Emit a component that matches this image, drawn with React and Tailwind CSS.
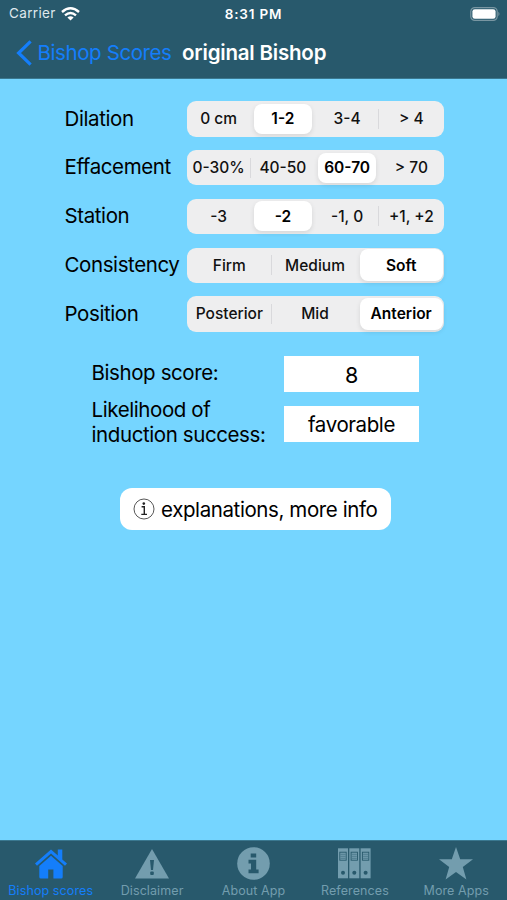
import React, { useState } from 'react';

const questions = [
    { label: 'Dilation', options: ['0 cm', '1-2', '3-4', '> 4'], initial: 1 },
    { label: 'Effacement', options: ['0-30%', '40-50', '60-70', '> 70'], initial: 2 },
    { label: 'Station', options: ['-3', '-2', '-1, 0', '+1, +2'], initial: 1 },
    { label: 'Consistency', options: ['Firm', 'Medium', 'Soft'], initial: 2 },
    { label: 'Position', options: ['Posterior', 'Mid', 'Anterior'], initial: 2 },
];

const HomeIcon = () => (
    <svg width="32" height="30" viewBox="0 0 32 30" fill="currentColor">
        <path d="M16 0.5 L0 14.5 L2 16.8 L16 4.6 L30 16.8 L32 14.5 L27.3 10.4 V0.5 H22.8 V6.4 Z" />
        <path d="M16 6.8 L4.3 17 V28 Q4.3 29.5 5.8 29.5 H13.2 V20.5 H18.4 V29.5 H26.2 Q27.7 29.5 27.7 28 V17 Z" />
    </svg>
);

const WarningIcon = () => (
    <svg width="34" height="30" viewBox="0 0 34 30">
        <path d="M17 0 L34 29.5 H0 Z" fill="currentColor" />
        <path d="M15 11 H19 L18 21 H16 Z" fill="#28596c" />
        <rect x="15.2" y="22.6" width="3.6" height="3.4" rx="1" fill="#28596c" />
    </svg>
);

const InfoIcon = () => (
    <svg width="33" height="33" viewBox="0 0 33 33">
        <circle cx="16.5" cy="16.5" r="16.3" fill="currentColor" />
        <path d="M13.7 6.4 H19.2 V10.4 H13.7 Z M11.5 12.8 H19.2 V22.6 H21.6 V26.2 H11.5 V22.6 H14 V16.4 H11.5 Z" fill="#28596c" />
    </svg>
);

const BindersIcon = () => (
    <svg width="33" height="31" viewBox="0 0 33 31">
        {[0, 11.3, 22.6].map((x) => (
            <g key={x} transform={`translate(${x} 0)`}>
                <rect x="0" y="0.3" width="10" height="30" fill="currentColor" />
                <rect x="1.8" y="4.2" width="6.4" height="8" fill="none" stroke="#28596c" strokeWidth="0.9" />
                <path d="M2.5 6.3 H7.5 M2.5 8.3 H7.5 M2.5 10.3 H7.5" stroke="#28596c" strokeWidth="0.5" />
                <circle cx="5" cy="24.7" r="2" fill="#28596c" />
            </g>
        ))}
    </svg>
);

const StarIcon = () => (
    <svg width="34" height="33" viewBox="0 0 34 33" fill="currentColor">
        <path d="M17 0 L21.2 12.2 H34 L23.8 20.1 L27.4 32.5 L17 25.1 L6.6 32.5 L10.2 20.1 L0 12.2 H12.8 Z" />
    </svg>
);

const tabs = [
    { name: 'Bishop scores', icon: HomeIcon },
    { name: 'Disclaimer', icon: WarningIcon },
    { name: 'About App', icon: InfoIcon },
    { name: 'References', icon: BindersIcon },
    { name: 'More Apps', icon: StarIcon },
];

const Segmented = ({ options, value, onChange }) => (
    <div className="flex h-[35.4px] w-[257px] rounded-[9px] bg-[#eeeeef]">
        {options.map((option, i) => {
            const selected = i === value;
            const divider = i > 0 && !selected && i - 1 !== value;
            const wide = options.length === 3;
            return (
                <button
                    key={option}
                    onClick={() => onChange(i)}
                    className="flex flex-1 basis-0 items-center justify-center text-[15.5px] font-medium text-[#111] whitespace-nowrap"
                >
                    <span className={divider ? 'h-5 w-px -ml-px bg-[#d9d9dc]' : 'h-5 w-0'}></span>
                    <span
                        className={
                            selected
                                ? `flex flex-1 items-center justify-center rounded-[8px] bg-white font-semibold text-black shadow-[0_2px_5px_rgba(0,0,0,0.1)] ${wide ? 'mr-px ml-[2px] h-8' : 'mx-[3px] h-[30px]'}`
                                : 'flex-1 text-center'
                        }
                    >
                        {option}
                    </span>
                </button>
            );
        })}
    </div>
);

const App = () => {
    const [answers, setAnswers] = useState(questions.map((q) => q.initial));
    const [activeTab, setActiveTab] = useState('Bishop scores');

    const choose = (row, i) => setAnswers(answers.map((a, r) => (r === row ? i : a)));

    return (
        <div className="flex h-[900px] w-[507px] flex-col overflow-hidden bg-[#75d5ff] font-['Inter',sans-serif] text-black">
            <header className="h-[79px] shrink-0 border-b border-[#3a7890] bg-[#28596c] text-white">
                {/* Status bar */}
                <div className="grid h-[27px] grid-cols-3 items-center px-[6px] text-[13.5px]">
                    <div className="flex items-center gap-[5px] pl-[3px] text-[#dfe8ec]">
                        <span className="tracking-[0.35px]">Carrier</span>
                        <svg width="19" height="14" viewBox="0 0 19 14" fill="none" stroke="white" strokeWidth="2.4">
                            <path d="M1 5 Q9.5 -2.4 18 5" />
                            <path d="M4 8.4 Q9.5 3.6 15 8.4" />
                            <path d="M9.5 13.6 L6.4 10.5 Q9.5 8 12.6 10.5 Z" fill="white" stroke="none" />
                        </svg>
                    </div>
                    <div className="pt-px text-center font-semibold tracking-[0.8px]">8:31 PM</div>
                    <svg className="justify-self-end" width="31" height="14" viewBox="0 0 31 14">
                        <rect x="0.8" y="0.6" width="26.4" height="12.8" rx="4" fill="none" stroke="#7996a2" strokeWidth="1.2" />
                        <rect x="2.4" y="2.2" width="23.2" height="9.6" rx="2.4" fill="white" />
                        <path d="M28.4 4.8 Q30.6 7 28.4 9.2 Z" fill="#7996a2" />
                    </svg>
                </div>
                {/* Navigation bar */}
                <div className="flex h-[51px] items-center pl-[16px]">
                    <button className="flex items-center gap-[4.5px] text-[20.5px] tracking-[-0.4px] text-[#147efb]">
                        <svg width="17" height="26" viewBox="0 0 17 26" fill="none" stroke="currentColor" strokeWidth="3.2">
                            <path d="M14.6 1.4 L2.6 13 L14.6 24.6" />
                        </svg>
                        <span className="pt-px">Bishop Scores</span>
                    </button>
                    <h1 className="ml-[10.5px] pt-px text-[20.5px] font-semibold tracking-[-0.2px]">original Bishop</h1>
                </div>
            </header>

            <main className="flex-1 pt-[22.2px]">
                <div className="flex flex-col gap-[13.4px] pl-[64.5px]">
                    {questions.map((q, row) => (
                        <div key={q.label} className="flex items-center">
                            <span className="w-[122px] text-[20.5px] leading-none tracking-[-0.4px]">{q.label}</span>
                            <Segmented options={q.options} value={answers[row]} onChange={(i) => choose(row, i)} />
                        </div>
                    ))}
                </div>

                <div className="mt-[24px] grid grid-cols-[192.5px_135px] gap-y-[14.5px] pl-[91.5px] text-[20.5px] leading-6 tracking-[-0.4px]">
                    <div className="flex h-[36px] items-center pb-px">Bishop score:</div>
                    <div className="flex h-[36px] items-center justify-center bg-white pt-[2px] text-[21.5px]">8</div>
                    <div className="-mt-[8px] leading-[24.5px]">Likelihood of<br />induction success:</div>
                    <div className="flex h-[36px] items-center justify-center bg-white pt-[2px]">favorable</div>
                </div>

                <button className="mt-[41px] ml-[119.5px] flex h-[42px] w-[271.5px] items-center justify-center gap-[6px] rounded-[12px] bg-white text-[20.5px] tracking-[-0.4px]">
                    <svg width="22" height="22" viewBox="0 0 22 22">
                        <circle cx="11" cy="11" r="10" fill="none" stroke="#444" strokeWidth="0.9" />
                        <circle cx="10.8" cy="5.6" r="1.3" fill="#222" />
                        <path d="M8.6 8.8 H11.3 V16.4 M8.3 16.4 H14" fill="none" stroke="#222" strokeWidth="1.4" />
                    </svg>
                    <span className="pt-[2px]">explanations, more info</span>
                </button>
            </main>

            <nav className="grid h-[60px] shrink-0 grid-cols-5 border-t border-[#3a7890] bg-[#28596c]">
                {tabs.map(({ name, icon: Icon }) => (
                    <button
                        key={name}
                        onClick={() => setActiveTab(name)}
                        className={`flex flex-col items-center pt-[5px] text-[12.5px] leading-[16px] tracking-[0.1px] whitespace-nowrap ${activeTab === name ? 'text-[#147efb]' : 'text-[#739dae]'}`}
                    >
                        <span className="flex h-[35px] items-center"><Icon /></span>
                        <span className="mt-[2px]">{name}</span>
                    </button>
                ))}
            </nav>
        </div>
    );
};

export default App;
